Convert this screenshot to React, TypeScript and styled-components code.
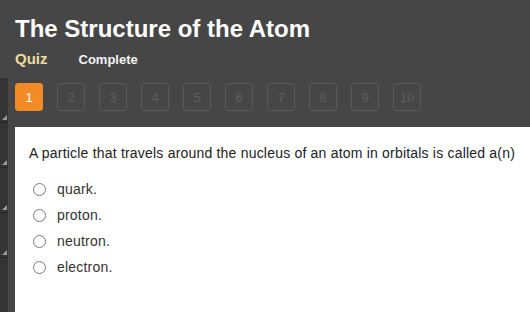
import styled, { createGlobalStyle } from "styled-components";

const GlobalStyle = createGlobalStyle`
  html, body, #root {
    margin: 0;
    padding: 0;
    height: 100%;
  }
  body {
    background: #464646;
    font-family: "Liberation Sans", Arial, sans-serif;
    overflow: hidden;
  }
`;

type Choice = {
  id: string;
  label: string;
};

const choices: Choice[] = [
  { id: "a", label: "quark." },
  { id: "b", label: "proton." },
  { id: "c", label: "neutron." },
  { id: "d", label: "electron." },
];

const pages = [1, 2, 3, 4, 5, 6, 7, 8, 9, 10];
const railSegments = [0, 1, 2, 3];

export default function App() {
  return (
    <Page>
      <GlobalStyle />
      <Header>
        <Title>The Structure of the Atom</Title>
        <SubRow>
          <Kind>Quiz</Kind>
          <Status>Complete</Status>
        </SubRow>
      </Header>
      <Body>
        <Rail>
          {railSegments.map(s => (
            <RailSegment key={s}>
              <Grip />
            </RailSegment>
          ))}
        </Rail>
        <Main>
          <Pager>
            {pages.map(n => (
              <PageBox key={n} active={n === 1}>
                {n}
              </PageBox>
            ))}
          </Pager>
          <Panel>
            <Question>
              A particle that travels around the nucleus of an atom in orbitals is called a(n)
            </Question>
            <Options>
              {choices.map(c => (
                <Option key={c.id}>
                  <Radio type="radio" name="q1" value={c.id} />
                  <span>{c.label}</span>
                </Option>
              ))}
            </Options>
          </Panel>
        </Main>
      </Body>
    </Page>
  );
}

const Page = styled.div`
  height: 100%;
  display: flex;
  flex-direction: column;
`;

const Header = styled.header`
  padding: 15px 0 0 15px;
`;

const Title = styled.h1`
  margin: 0;
  font-size: 24px;
  line-height: 28px;
  font-weight: bold;
  color: #ffffff;
`;

const SubRow = styled.div`
  display: flex;
  align-items: baseline;
  gap: 31px;
  margin-top: 6px;
  height: 20px;
`;

const Kind = styled.span`
  font-size: 15px;
  line-height: 20px;
  font-weight: bold;
  color: #eedc9e;
`;

const Status = styled.span`
  font-size: 13px;
  line-height: 20px;
  font-weight: bold;
  color: #f4f4f4;
`;

const Body = styled.div`
  flex: 1;
  display: flex;
  margin-top: 9px;
  min-height: 0;
`;

const Rail = styled.div`
  width: 8px;
  margin-right: 7px;
  display: flex;
  flex-direction: column;
  background: #343434;
`;

const RailSegment = styled.div`
  height: 44px;
  display: flex;
  justify-content: flex-end;
  align-items: flex-end;
  border-bottom: 1px solid #262626;
`;

const Grip = styled.div`
  width: 0;
  height: 0;
  margin: 0 1px 2px 0;
  border-left: 5px solid transparent;
  border-bottom: 5px solid #9a9a9a;
`;

const Main = styled.div`
  flex: 1;
  display: flex;
  flex-direction: column;
`;

const Pager = styled.nav`
  display: flex;
  gap: 14px;
  padding-top: 5px;
  margin-bottom: 16px;
`;

const PageBox = styled.div<{ active: boolean }>`
  width: 28px;
  height: 28px;
  box-sizing: border-box;
  border-radius: 3px;
  border: 1px solid ${p => (p.active ? "#f28a26" : "#5a5a5a")};
  background: ${p => (p.active ? "#f28a26" : "transparent")};
  color: ${p => (p.active ? "#ffffff" : "#5e5e5e")};
  font-size: 13px;
  display: flex;
  align-items: center;
  justify-content: center;
`;

const Panel = styled.section`
  flex: 1;
  background: #ffffff;
  padding: 16px 0 0 14px;
`;

const Question = styled.p`
  margin: 0 0 13px;
  font-size: 14px;
  line-height: 20px;
  letter-spacing: 0.2px;
  color: #222222;
  white-space: nowrap;
`;

const Options = styled.div`
  display: flex;
  flex-direction: column;
`;

const Option = styled.label`
  display: flex;
  align-items: center;
  height: 26px;
  font-size: 14px;
  letter-spacing: 0.2px;
  color: #333333;
`;

const Radio = styled.input`
  appearance: none;
  width: 13px;
  height: 13px;
  margin: 0 11px 0 4px;
  border: 1px solid #7a7a7a;
  border-radius: 50%;
  background: #ffffff;
  box-sizing: border-box;
`;
